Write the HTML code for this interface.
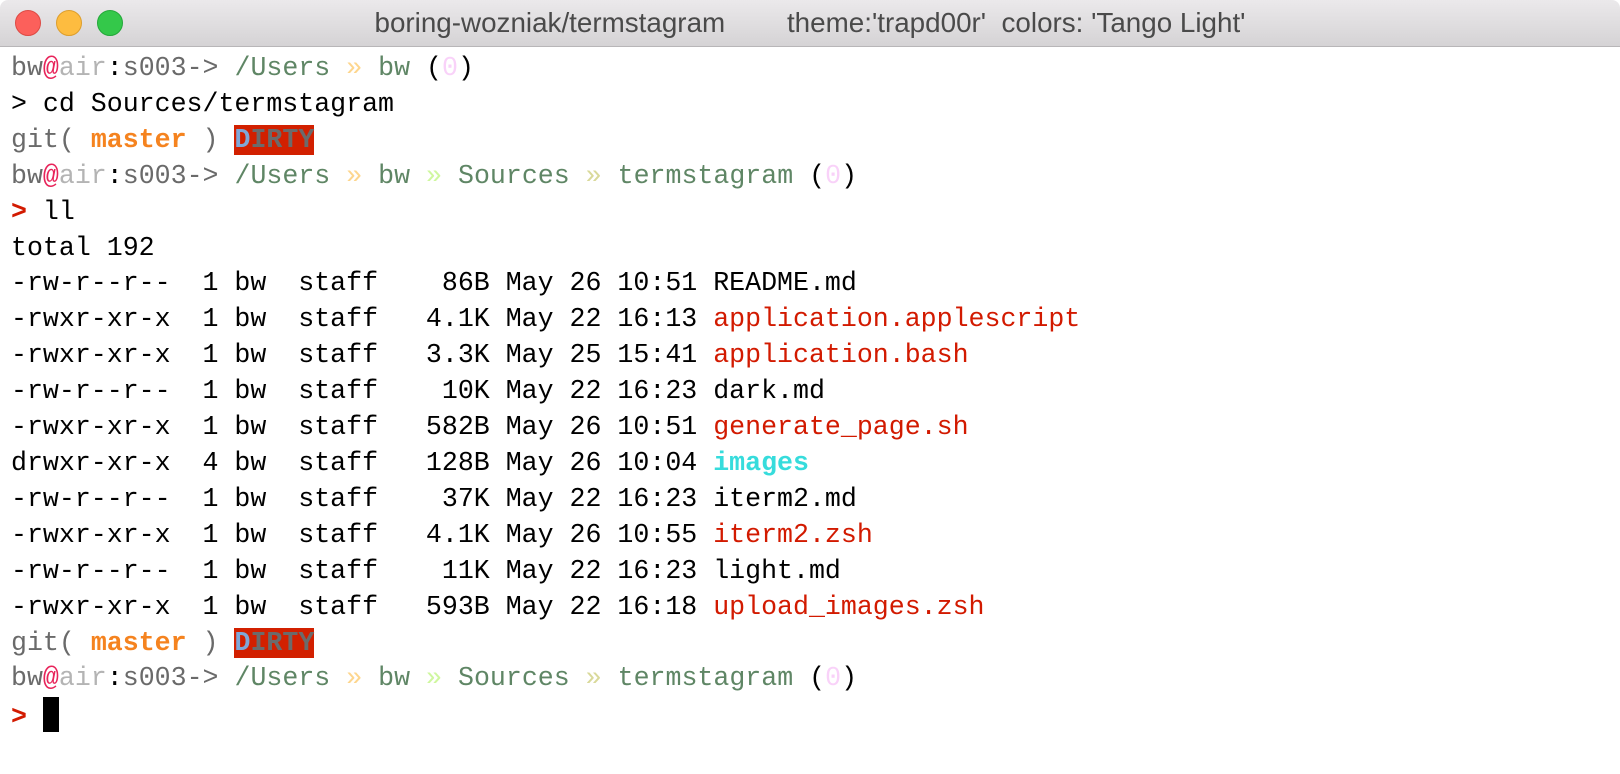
<!DOCTYPE html>
<html><head><meta charset="utf-8"><style>
html,body{margin:0;padding:0;background:#fff;width:1620px;height:774px;overflow:hidden}
.tb{position:absolute;left:0;top:0;width:1620px;height:46px;background:linear-gradient(#ebe9eb,#d5d3d5);border-bottom:1px solid #b8b6b8;border-radius:8px 8px 0 0}
.dot{position:absolute;top:10px;width:24px;height:24px;border-radius:50%}
.title{position:absolute;left:0;right:0;top:7px;text-align:center;font:27.8px "Liberation Sans",sans-serif;color:#4a4a4a;white-space:pre}
pre{position:absolute;left:11px;top:51px;margin:0;font:26.6px/35.9px "Liberation Mono",monospace;color:#000}
.g{color:#6a6a6a}.p{color:#e8245a}.l{color:#b4b4b4}.gr{color:#5f8665}.o1{color:#fdd68e}.o2{color:#cff79f}.o3{color:#d9d99a}.z{color:#f9d2f9}
.r{color:#d21a00}.c{color:#36dcdc;font-weight:bold}.m{color:#f5831f;font-weight:bold}
.d{background:#d22000;font-weight:bold;color:#6b6b6b}.d b{color:#7fa8d8}
.cur{display:inline-block;width:16px;height:35px;background:#000;vertical-align:-8px}
</style></head><body>
<div class="tb">
<div class="dot" style="left:15px;background:#fc605b;border:1px solid #dd4a44"></div>
<div class="dot" style="left:56px;background:#fdbc40;border:1px solid #dd9e2c"></div>
<div class="dot" style="left:97px;background:#34c84a;border:1px solid #24a83a"></div>
<div class="title">boring-wozniak/termstagram        theme:'trapd00r'  colors: 'Tango Light'</div>
</div>
<pre><span class="g">bw</span><span class="p">@</span><span class="l">air</span>:<span class="g">s003-&gt;</span> <span class="gr">/Users</span> <span class="o1">»</span> <span class="gr">bw</span> (<span class="z">0</span>)
&gt; cd Sources/termstagram
<span class="g">git(</span> <span class="m">master</span> <span class="g">)</span> <span class="d"><b>D</b>IRTY</span>
<span class="g">bw</span><span class="p">@</span><span class="l">air</span>:<span class="g">s003-&gt;</span> <span class="gr">/Users</span> <span class="o1">»</span> <span class="gr">bw</span> <span class="o2">»</span> <span class="gr">Sources</span> <span class="o3">»</span> <span class="gr">termstagram</span> (<span class="z">0</span>)
<span class="r" style="font-weight:bold">&gt;</span> ll
total 192
-rw-r--r--  1 bw  staff    86B May 26 10:51 README.md
-rwxr-xr-x  1 bw  staff   4.1K May 22 16:13 <span class="r">application.applescript</span>
-rwxr-xr-x  1 bw  staff   3.3K May 25 15:41 <span class="r">application.bash</span>
-rw-r--r--  1 bw  staff    10K May 22 16:23 dark.md
-rwxr-xr-x  1 bw  staff   582B May 26 10:51 <span class="r">generate_page.sh</span>
drwxr-xr-x  4 bw  staff   128B May 26 10:04 <span class="c">images</span>
-rw-r--r--  1 bw  staff    37K May 22 16:23 iterm2.md
-rwxr-xr-x  1 bw  staff   4.1K May 26 10:55 <span class="r">iterm2.zsh</span>
-rw-r--r--  1 bw  staff    11K May 22 16:23 light.md
-rwxr-xr-x  1 bw  staff   593B May 22 16:18 <span class="r">upload_images.zsh</span>
<span class="g">git(</span> <span class="m">master</span> <span class="g">)</span> <span class="d"><b>D</b>IRTY</span>
<span class="g">bw</span><span class="p">@</span><span class="l">air</span>:<span class="g">s003-&gt;</span> <span class="gr">/Users</span> <span class="o1">»</span> <span class="gr">bw</span> <span class="o2">»</span> <span class="gr">Sources</span> <span class="o3">»</span> <span class="gr">termstagram</span> (<span class="z">0</span>)
<span class="r" style="font-weight:bold">&gt;</span> <span class="cur"></span></pre>
</body></html>
